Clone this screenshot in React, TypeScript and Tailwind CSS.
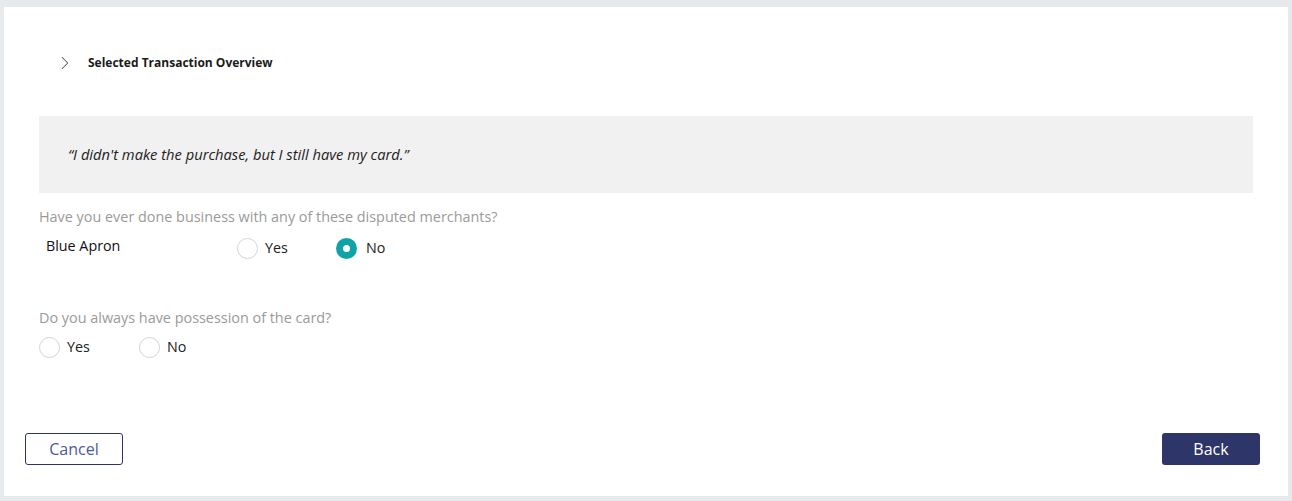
import { ChevronRight } from 'lucide-react';

function Radio({ label, checked = false }: { label: string; checked?: boolean }) {
  return (
    <label className="flex items-center gap-[7px]">
      {checked ? (
        <span className="w-[21px] h-[21px] rounded-full bg-[#0fa3a8] flex items-center justify-center">
          <span className="w-[7px] h-[7px] rounded-full bg-white" />
        </span>
      ) : (
        <span className="w-[21px] h-[21px] rounded-full border border-[#cfd4da] bg-white" />
      )}
      <span className={`text-[14.3px] text-[#222] ${checked ? 'ml-[2px]' : ''}`}>{label}</span>
    </label>
  );
}

export default function App() {
  return (
    <div
      className="w-[1292px] h-[501px] bg-[#e6eaed] pt-[7px] pl-[4px]"
      style={{ fontFamily: '"Open Sans", "Noto Sans", sans-serif' }}
    >
      <div className="w-[1284px] h-[489px] bg-white flex flex-col">
        {/* overview toggle */}
        <div className="flex items-center h-[22px] mt-[45px] pl-[50px]">
          <ChevronRight className="w-[22px] h-[22px] text-[#555]" strokeWidth={1.1} />
          <span className="ml-[12px] text-[12px] font-bold text-[#1a1a1a]">Selected Transaction Overview</span>
        </div>

        {/* quote */}
        <div className="mt-[42px] ml-[35px] w-[1214px] h-[77px] bg-[#f1f1f1] flex items-center pl-[29px]">
          <p className="italic text-[14.7px] text-[#222]">“I didn't make the purchase, but I still have my card.”</p>
        </div>

        {/* merchants */}
        <div className="ml-[35px] mt-[14px]">
          <p className="text-[14.4px] text-[#9a9a9a] leading-[20px]">Have you ever done business with any of these disputed merchants?</p>
          <div className="flex items-center mt-[10px] h-[22px]">
            <span className="ml-[7px] w-[191px] text-[14.3px] text-[#111] -mt-[4px]">Blue Apron</span>
            <div className="w-[99px]"><Radio label="Yes" /></div>
            <Radio label="No" checked />
          </div>
        </div>

        {/* possession */}
        <div className="ml-[35px] mt-[49px]">
          <p className="text-[14.4px] text-[#9a9a9a] leading-[20px]">Do you always have possession of the card?</p>
          <div className="flex items-center mt-[8px] h-[22px]">
            <div className="w-[100px]"><Radio label="Yes" /></div>
            <Radio label="No" />
          </div>
        </div>

        {/* actions */}
        <div className="mt-auto mb-[31px] flex justify-between pl-[21px] pr-[28px]">
          <button className="w-[98px] h-[32px] rounded-[3px] border border-[#2e3568] text-[16px] text-[#4a5a9e] bg-white">
            Cancel
          </button>
          <button className="w-[98px] h-[32px] rounded-[3px] bg-[#2e3568] text-[16px] text-white">
            Back
          </button>
        </div>
      </div>
    </div>
  );
}
